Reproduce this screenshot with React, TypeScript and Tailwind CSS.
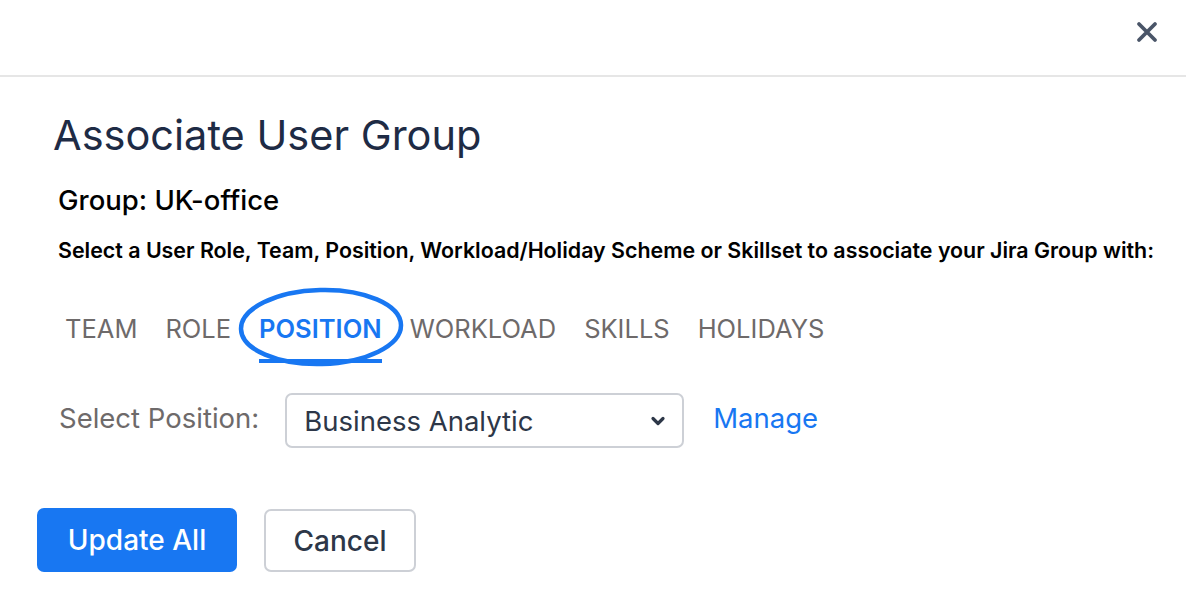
import React from "react";

const tabs = ["TEAM", "ROLE", "POSITION", "WORKLOAD", "SKILLS", "HOLIDAYS"];

export default function App() {
  const active = "POSITION";
  return (
    <div
      className="w-[1186px] h-[602px] bg-white overflow-hidden text-[#1a1a1a]"
      style={{ fontFamily: "Inter, 'Noto Sans', sans-serif" }}
    >
      {/* header */}
      <div className="h-[77px] border-b-2 border-[#e6e6e6] flex items-center justify-end pr-[28px] pb-[12px]">
        <button className="text-[#4a5568]" aria-label="Close">
          <svg width="22" height="22" viewBox="0 0 22 22" fill="none">
            <path d="M3 3L19 19M19 3L3 19" stroke="currentColor" strokeWidth="3.8" strokeLinecap="round" />
          </svg>
        </button>
      </div>

      <div className="pl-[37px]">
        <div className="pl-[16px]">
          <h1 className="mt-[33px] text-[41.5px] leading-[50px] font-normal text-[#1e2b45]">
            Associate User Group
          </h1>
          <div className="mt-[24px] pl-[5px] text-[27.5px] leading-[32px] font-medium text-black">
            Group: UK-office
          </div>
          <div className="mt-[21px] pl-[5px] text-[21.4px] leading-[26px] font-semibold text-black whitespace-nowrap">
            Select a User Role, Team, Position, Workload/Holiday Scheme or Skillset to associate your Jira Group with:
          </div>

          {/* tabs */}
          <div className="mt-[51px] flex items-start gap-[28px] pl-[12px]">
            {tabs.map((t) => {
              const isActive = t === active;
              return (
                <div key={t} className="relative">
                  <div
                    className={
                      isActive
                        ? "text-[25.5px] leading-[30px] font-semibold text-[#1877f2] border-b-4 border-[#1877f2] pb-[15px]"
                        : "text-[25.5px] leading-[30px] font-normal text-[#6e6a6a] border-b-4 border-transparent pb-[15px]"
                    }
                  >
                    {t}
                  </div>
                  {isActive && (
                    <svg
                      className="absolute left-[-21px] top-[-29px] pointer-events-none"
                      width="168"
                      height="84"
                      viewBox="0 0 168 84"
                      fill="none"
                    >
                      <ellipse
                        cx="83"
                        cy="42"
                        rx="80"
                        ry="37"
                        stroke="#1877f2"
                        strokeWidth="4.5"
                        transform="rotate(-1.5 83 42)"
                      />
                    </svg>
                  )}
                </div>
              );
            })}
          </div>

          {/* select row */}
          <div className="mt-[30px] flex items-center pl-[6px]">
            <span className="text-[27.5px] text-[#6e6a6a] pb-[4px]">Select Position:</span>
            <div className="ml-[26px] w-[399px] h-[55px] border-2 border-[#cdd0d6] rounded-[7px] flex items-center justify-between pl-[17px] pr-[16px]">
              <span className="text-[27.5px] text-[#2d3748] pt-[3px]">Business Analytic</span>
              <svg width="16" height="12" viewBox="0 0 16 12" fill="none">
                <path d="M3 3.5L8 8.5L13 3.5" stroke="#2d3748" strokeWidth="3.2" strokeLinecap="round" strokeLinejoin="round" />
              </svg>
            </div>
            <a className="ml-[29px] text-[27.5px] text-[#1877f2] pb-[4px]">Manage</a>
          </div>
        </div>

        {/* actions */}
        <div className="mt-[60px] flex items-center gap-[27px]">
          <button className="w-[200px] h-[64px] rounded-[7px] bg-[#1877f2] text-white text-[28px] font-medium">
            Update All
          </button>
          <button className="w-[152px] h-[63px] rounded-[7px] border-2 border-[#cdd0d6] bg-white text-[#2d3748] text-[28px] font-medium pt-[1px]">
            Cancel
          </button>
        </div>
      </div>
    </div>
  );
}
